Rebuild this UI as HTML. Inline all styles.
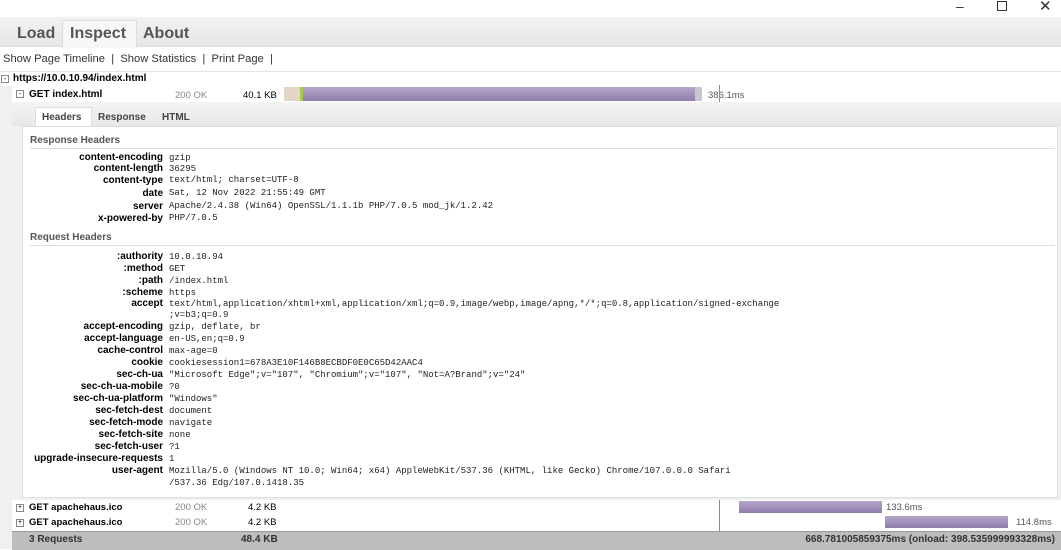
<!DOCTYPE html>
<html><head><style>
body{margin:0;width:1061px;height:549px;overflow:hidden;background:#fff;font-family:"Liberation Sans",sans-serif;position:relative}
.a{position:absolute;white-space:nowrap}
.k{position:absolute;right:898px;font-size:10px;font-weight:bold;color:#000}
.v{position:absolute;left:169px;font-family:"Liberation Mono",monospace;font-size:9px;color:#222}
.sec{position:absolute;left:30px;font-size:10px;font-weight:bold;color:#555}
.hr{position:absolute;left:30px;right:6px;height:1px;background:#ddd}
</style></head><body>
<div class="a" style="left:956px;top:-2px;font-size:14px;color:#333">–</div>
<div class="a" style="left:997px;top:0;width:8px;height:8px;border:1px solid #333;top:1px"></div>
<div class="a" style="left:1039px;top:-3px;font-size:15px;color:#333">✕</div>
<div class="a" style="left:0;top:17px;width:1061px;height:29px;background:linear-gradient(#f2f2f2,#e6e6e6);border-bottom:1px solid #ddd"></div>
<div class="a" style="left:62px;top:20px;width:73px;height:27px;background:#f7f7f7;border:1px solid #ddd;border-bottom:none"></div>
<div class="a" style="left:17px;top:25px;font-size:16px;font-weight:bold;color:#555">Load</div>
<div class="a" style="left:70px;top:25px;font-size:16px;font-weight:bold;color:#555">Inspect</div>
<div class="a" style="left:143px;top:25px;font-size:16px;font-weight:bold;color:#555">About</div>
<div class="a" style="left:3px;top:53px;font-size:11.2px;color:#333">Show Page Timeline &nbsp;| &nbsp;Show Statistics &nbsp;| &nbsp;Print Page &nbsp;|</div>
<div class="a" style="left:0;top:71px;width:1061px;height:1px;background:#e4e4e4"></div>
<div class="a" style="left:1px;top:75px;width:6px;height:6px;border:1px solid #888;font-size:8px;line-height:6px;text-align:center;color:#333">-</div>
<div class="a" style="left:13px;top:73px;font-size:10px;font-weight:bold">https://10.0.10.94/index.html</div>
<div class="a" style="left:0;top:86px;width:12px;height:463px;background:#f0f0f0"></div>
<div class="a" style="left:12px;top:102px;width:1049px;height:398px;background:#f0f0f0"></div>
<div class="a" style="left:16px;top:90px;width:6px;height:6px;border:1px solid #888;font-size:8px;line-height:6px;text-align:center;color:#333">-</div>
<div class="a" style="left:29px;top:89px;font-size:10px;font-weight:bold">GET index.html</div>
<div class="a" style="left:175px;top:90px;font-size:9.5px;color:#888">200 OK</div>
<div class="a" style="left:243px;top:90px;font-size:9.5px;color:#000">40.1 KB</div>
<div class="a" style="left:284px;top:87px;width:16px;height:14px;background:#e2d6c4"></div>
<div class="a" style="left:300px;top:87px;width:3px;height:14px;background:#a8c850"></div>
<div class="a" style="left:303px;top:87px;width:392px;height:14px;background:linear-gradient(#b4a6ca,#8e7cae)"></div>
<div class="a" style="left:695px;top:87px;width:7px;height:14px;background:#c8c8c8"></div>
<div class="a" style="left:708px;top:90px;font-size:9.5px;color:#555">386.1ms</div>
<div class="a" style="left:719px;top:85px;width:1px;height:17px;background:#8a7ce0"></div>
<div class="a" style="left:12px;top:102px;width:1049px;height:24px;background:linear-gradient(#f4f4f4,#e8e8e8)"></div>
<div class="a" style="left:35px;top:107px;width:55px;height:20px;background:#fff;border:1px solid #ddd;border-bottom:none"></div>
<div class="a" style="left:42px;top:112px;font-size:10px;font-weight:bold;color:#444">Headers</div>
<div class="a" style="left:98px;top:112px;font-size:10px;font-weight:bold;color:#444">Response</div>
<div class="a" style="left:162px;top:112px;font-size:10px;font-weight:bold;color:#444">HTML</div>
<div class="a" style="left:22px;top:126px;width:1034px;height:370px;background:#fff;border:1px solid #ddd"></div>
<div class="sec" style="top:135px">Response Headers</div><div class="hr" style="top:148px"></div>
<div class="k" style="top:152px">content-encoding</div><div class="v" style="top:153px">gzip</div>
<div class="k" style="top:163px">content-length</div><div class="v" style="top:164px">36295</div>
<div class="k" style="top:175px">content-type</div><div class="v" style="top:175px">text/html; charset=UTF-8</div>
<div class="k" style="top:188px">date</div><div class="v" style="top:188px">Sat, 12 Nov 2022 21:55:49 GMT</div>
<div class="k" style="top:201px">server</div><div class="v" style="top:201px">Apache/2.4.38 (Win64) OpenSSL/1.1.1b PHP/7.0.5 mod_jk/1.2.42</div>
<div class="k" style="top:213px">x-powered-by</div><div class="v" style="top:213px">PHP/7.0.5</div>
<div class="sec" style="top:232px">Request Headers</div><div class="hr" style="top:245px"></div>
<div class="k" style="top:251px">:authority</div><div class="v" style="top:252px">10.0.10.94</div>
<div class="k" style="top:263px">:method</div><div class="v" style="top:264px">GET</div>
<div class="k" style="top:275px">:path</div><div class="v" style="top:276px">/index.html</div>
<div class="k" style="top:287px">:scheme</div><div class="v" style="top:288px">https</div>
<div class="k" style="top:298px">accept</div><div class="v" style="top:299px">text/html,application/xhtml+xml,application/xml;q=0.9,image/webp,image/apng,*/*;q=0.8,application/signed-exchange</div>
<div class="v" style="top:310px">;v=b3;q=0.9</div>
<div class="k" style="top:321px">accept-encoding</div><div class="v" style="top:322px">gzip, deflate, br</div>
<div class="k" style="top:333px">accept-language</div><div class="v" style="top:334px">en-US,en;q=0.9</div>
<div class="k" style="top:345px">cache-control</div><div class="v" style="top:346px">max-age=0</div>
<div class="k" style="top:357px">cookie</div><div class="v" style="top:358px">cookiesession1=678A3E10F146B8ECBDF0E0C65D42AAC4</div>
<div class="k" style="top:369px">sec-ch-ua</div><div class="v" style="top:370px">"Microsoft Edge";v="107", "Chromium";v="107", "Not=A?Brand";v="24"</div>
<div class="k" style="top:381px">sec-ch-ua-mobile</div><div class="v" style="top:382px">?0</div>
<div class="k" style="top:393px">sec-ch-ua-platform</div><div class="v" style="top:394px">"Windows"</div>
<div class="k" style="top:405px">sec-fetch-dest</div><div class="v" style="top:406px">document</div>
<div class="k" style="top:417px">sec-fetch-mode</div><div class="v" style="top:418px">navigate</div>
<div class="k" style="top:429px">sec-fetch-site</div><div class="v" style="top:430px">none</div>
<div class="k" style="top:441px">sec-fetch-user</div><div class="v" style="top:442px">?1</div>
<div class="k" style="top:453px">upgrade-insecure-requests</div><div class="v" style="top:454px">1</div>
<div class="k" style="top:465px">user-agent</div><div class="v" style="top:466px">Mozilla/5.0 (Windows NT 10.0; Win64; x64) AppleWebKit/537.36 (KHTML, like Gecko) Chrome/107.0.0.0 Safari</div>
<div class="v" style="top:478px">/537.36 Edg/107.0.1418.35</div>
<div class="a" style="left:719px;top:500px;width:1px;height:31px;background:#8a7ce0"></div>
<div class="a" style="left:16px;top:504px;width:6px;height:6px;border:1px solid #888;font-size:7px;line-height:6px;text-align:center">+</div>
<div class="a" style="left:29px;top:502px;font-size:9.5px;font-weight:bold">GET apachehaus.ico</div>
<div class="a" style="left:175px;top:502px;font-size:9.5px;color:#888">200 OK</div>
<div class="a" style="left:248px;top:502px;font-size:9.5px">4.2 KB</div>
<div class="a" style="left:739px;top:501px;width:143px;height:12px;background:linear-gradient(#b4a6ca,#8e7cae)"></div>
<div class="a" style="left:886px;top:502px;font-size:9.5px;color:#555">133.6ms</div>
<div class="a" style="left:16px;top:519px;width:6px;height:6px;border:1px solid #888;font-size:7px;line-height:6px;text-align:center">+</div>
<div class="a" style="left:29px;top:517px;font-size:9.5px;font-weight:bold">GET apachehaus.ico</div>
<div class="a" style="left:175px;top:517px;font-size:9.5px;color:#888">200 OK</div>
<div class="a" style="left:248px;top:517px;font-size:9.5px">4.2 KB</div>
<div class="a" style="left:885px;top:516px;width:123px;height:12px;background:linear-gradient(#b4a6ca,#8e7cae)"></div>
<div class="a" style="left:1016px;top:517px;font-size:9.5px;color:#555">114.8ms</div>
<div class="a" style="left:12px;top:531px;width:1049px;height:18px;background:#bdbdbd;border-top:1px solid #999"></div>
<div class="a" style="left:29px;top:534px;font-size:10px;font-weight:bold;color:#333">3 Requests</div>
<div class="a" style="left:241px;top:534px;font-size:10px;font-weight:bold;color:#333">48.4 KB</div>
<div class="a" style="right:6px;top:534px;font-size:10px;font-weight:bold;color:#333">668.781005859375ms (onload: 398.535999993328ms)</div>
</body></html>
